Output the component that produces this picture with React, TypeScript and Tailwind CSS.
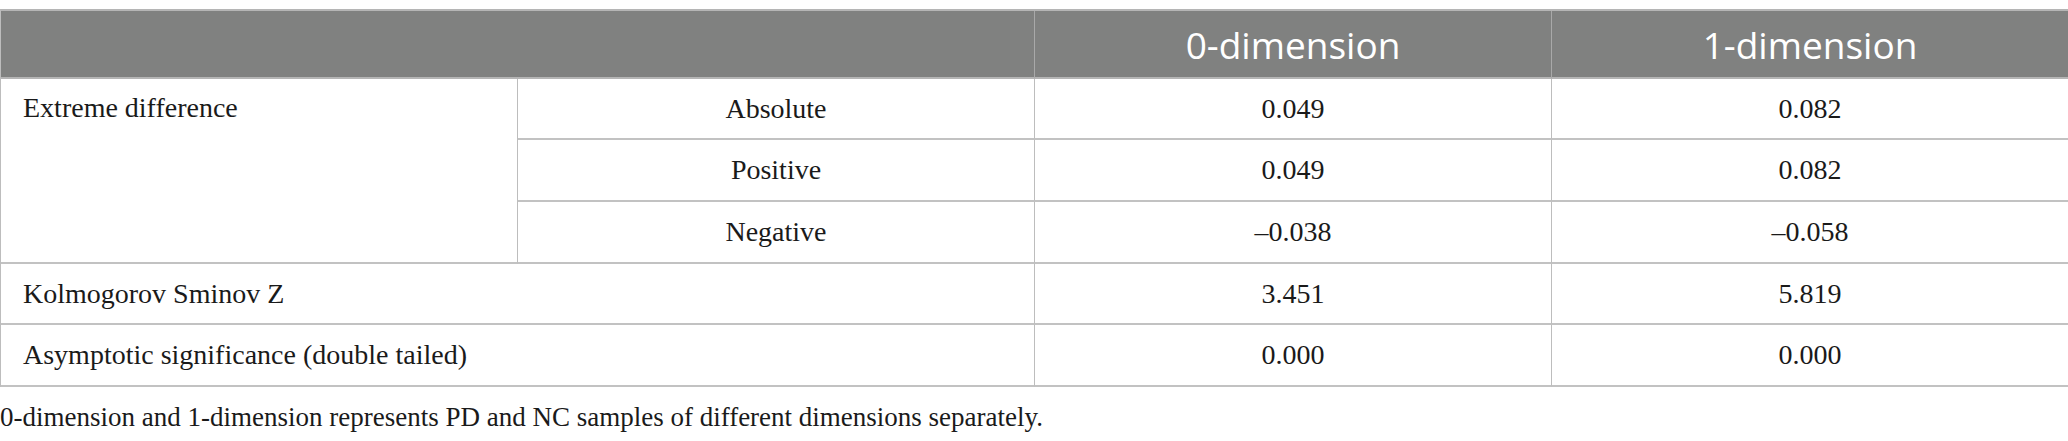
import React from "react";

const serif = { fontFamily: '"Liberation Serif", "Times New Roman", serif' };

export default function App() {
  const cell =
    "flex items-center justify-center border-r border-b-2 border-r-[#bdbdbd] border-b-[#c2c2c2] text-[28px] text-[#1a1a1a]";
  const left =
    "flex items-center justify-start pl-[22px] border-r border-b-2 border-r-[#bdbdbd] border-b-[#c2c2c2] text-[28px] text-[#1a1a1a]";
  return (
    <div className="w-[2068px] h-[441px] bg-white" style={serif}>
      <div className="pt-[9px]">
        <div className="grid grid-cols-[517px_517px_517px_517px] grid-rows-[68px_61px_62px_62px_61px_62px] border-l border-t-2 border-l-[#bdbdbd] border-t-[#b5b5b5]">
          {/* header */}
          <div className="col-span-2 bg-[#808180] border-r border-r-[#a9a9a9] border-b-2 border-b-[#b5b5b5]" />
          <div
            className="flex items-center justify-center bg-[#808180] border-r border-r-[#a9a9a9] border-b-2 border-b-[#b5b5b5] text-white text-[37px] leading-none"
            style={{ fontFamily: '"Open Sans", "Noto Sans", sans-serif' }}
          >
            0-dimension
          </div>
          <div
            className="flex items-center justify-center bg-[#808180] border-r border-r-[#bdbdbd] border-b-2 border-b-[#b5b5b5] text-white text-[37px] leading-none"
            style={{ fontFamily: '"Open Sans", "Noto Sans", sans-serif' }}
          >
            1-dimension
          </div>

          {/* Extreme difference block */}
          <div className="row-span-3 flex items-start pl-[22px] pt-[8px] border-r border-b-2 border-r-[#bdbdbd] border-b-[#c2c2c2] text-[28px] text-[#1a1a1a]">
            Extreme difference
          </div>
          <div className={cell}>Absolute</div>
          <div className={cell}>0.049</div>
          <div className={cell}>0.082</div>
          <div className={cell}>Positive</div>
          <div className={cell}>0.049</div>
          <div className={cell}>0.082</div>
          <div className={cell}>Negative</div>
          <div className={cell}>–0.038</div>
          <div className={cell}>–0.058</div>

          <div className={left + " col-span-2"}>Kolmogorov Sminov Z</div>
          <div className={cell}>3.451</div>
          <div className={cell}>5.819</div>

          <div className={left + " col-span-2"}>Asymptotic significance (double tailed)</div>
          <div className={cell}>0.000</div>
          <div className={cell}>0.000</div>
        </div>
        <div className="text-[27px] text-[#1a1a1a] leading-none pt-[17px]">
          0-dimension and 1-dimension represents PD and NC samples of different dimensions separately.
        </div>
      </div>
    </div>
  );
}
